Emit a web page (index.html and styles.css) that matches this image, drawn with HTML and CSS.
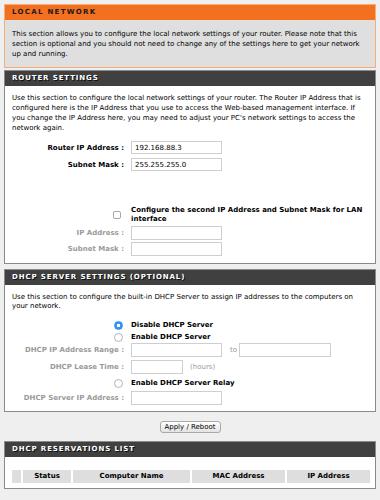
FILE: index.html
```html
<!DOCTYPE html>
<html lang="en">
  <head>
    <meta charset="utf-8" />
    <title>Local Network</title>
    <link rel="stylesheet" href="styles.css">
  </head>
  <body>
    <div class="page">
      <div class="notice">
        <h2 class="notice-title">LOCAL NETWORK</h2>
        <p class="notice-text">This section allows you to configure the local network settings of your router. Please note that this section is optional and you should not need to change any of the settings here to get your network up and running.</p>
      </div>

      <div class="section router">
        <h2 class="section-title">ROUTER SETTINGS</h2>
        <div class="section-body">
          <p class="intro">Use this section to configure the local network settings of your router. The Router IP Address that is configured here is the IP Address that you use to access the Web-based management interface. If you change the IP Address here, you may need to adjust your PC's network settings to access the network again.</p>
          <div class="field first">
            <label class="field-label">Router IP Address :</label>
            <input class="text wide" value="192.168.88.3" />
          </div>
          <div class="field second">
            <label class="field-label">Subnet Mask :</label>
            <input class="text wide" value="255.255.255.0" />
          </div>
          <div class="check-row">
            <span class="field-label"><input type="checkbox" class="checkbox" /></span>
            <span class="check-text">Configure the second IP Address and Subnet Mask for LAN interface</span>
          </div>
          <div class="field disabled lan-ip">
            <label class="field-label">IP Address :</label>
            <input class="text wide tall" />
          </div>
          <div class="field disabled lan-mask">
            <label class="field-label">Subnet Mask :</label>
            <input class="text wide tall" />
          </div>
        </div>
      </div>

      <div class="section dhcp">
        <h2 class="section-title">DHCP SERVER SETTINGS (OPTIONAL)</h2>
        <div class="section-body">
          <p class="intro tight">Use this section to configure the built-in DHCP Server to assign IP addresses to the computers on your network.</p>
          <div class="radio-row disable">
            <span class="field-label"><input type="radio" name="dhcp" class="radio" checked /></span>
            <span class="radio-text">Disable DHCP Server</span>
          </div>
          <div class="radio-row enable">
            <span class="field-label"><input type="radio" name="dhcp" class="radio" /></span>
            <span class="radio-text">Enable DHCP Server</span>
          </div>
          <div class="field disabled range">
            <label class="field-label">DHCP IP Address Range :</label>
            <input class="text wide tall" />
            <span class="note to">to</span>
            <input class="text wide tall" />
          </div>
          <div class="field disabled lease">
            <label class="field-label">DHCP Lease Time :</label>
            <input class="text short tall" />
            <span class="note hours">(hours)</span>
          </div>
          <div class="radio-row relay">
            <span class="field-label"><input type="radio" name="dhcp" class="radio" /></span>
            <span class="radio-text">Enable DHCP Server Relay</span>
          </div>
          <div class="field disabled relay-ip">
            <label class="field-label">DHCP Server IP Address :</label>
            <input class="text wide tall" />
          </div>
        </div>
      </div>

      <div class="actions">
        <button class="apply">Apply / Reboot</button>
      </div>

      <div class="section reservations">
        <h2 class="section-title">DHCP RESERVATIONS LIST</h2>
        <div class="section-body list-body">
          <div class="list-head">
            <div class="cell"></div>
            <div class="cell">Status</div>
            <div class="cell">Computer Name</div>
            <div class="cell">MAC Address</div>
            <div class="cell">IP Address</div>
          </div>
        </div>
      </div>
    </div>
  </body>
</html>
```

FILE: styles.css
```css
* {
  font-family: "DejaVu Sans", Verdana, sans-serif;
  box-sizing: border-box;
}

html, body {
  height: 100%;
  width: 100%;
}

body {
  margin: 0;
  background-color: #efefef;
  font-size: 7px;
  line-height: 10px;
  color: #000000;
}

.page {
  padding: 4px 4px 0 4px;
}

h2, p {
  margin: 0;
}

/* orange intro box */
.notice {
  border: 1px solid #f5ad78;
  background-color: #dfdfdf;
}

.notice-title {
  height: 15px;
  line-height: 15px;
  padding-left: 7px;
  background-color: #f2701f;
  font-size: 7px;
  font-weight: 700;
  letter-spacing: 1.3px;
  color: #1a1a1a;
}

.notice-text {
  padding: 9px 7px 8px 7px;
}

/* dark boxes */
.section {
  border: 1px solid #8a8a8a;
  background-color: #ffffff;
}

.router {
  margin-top: 2px;
}

.dhcp {
  margin-top: 5px;
}

.section-title {
  height: 15px;
  line-height: 15px;
  padding-left: 7px;
  background-color: #404040;
  font-size: 7px;
  font-weight: 700;
  letter-spacing: 0.9px;
  color: #ffffff;
  text-shadow: 1px 1px 0 #111111;
}

.section-body {
  padding: 7px 7px 7px 7px;
}

.dhcp .section-body {
  padding: 8px 7px 6px 7px;
}

.intro.tight {
  line-height: 9px;
}

.field, .check-row, .radio-row {
  display: flex;
  align-items: center;
}

.field-label {
  flex: none;
  width: 112px;
  margin-right: 7px;
  text-align: right;
  font-weight: 700;
  display: flex;
  justify-content: flex-end;
  align-items: center;
}

.disabled .field-label, .note {
  color: #9a9a9a;
}

.text {
  height: 13px;
  padding: 0 3px;
  border: 1px solid #cfcfcf;
  background-color: #ffffff;
  font-size: 7px;
  color: #000000;
  outline: none;
}

.text.tall {
  height: 14px;
}

.wide {
  width: 91px;
}

.short {
  width: 52px;
}

.note.to {
  margin: 0 2px 0 8px;
}

.range .text + .note + .text {
  width: 92px;
}

.note.hours {
  margin-left: 7px;
}

/* vertical rhythm taken from the screenshot */
.field.first { margin-top: 8px; }
.field.second { margin-top: 4px; }
.check-row { margin-top: 35px; }
.lan-ip { margin-top: 2px; }
.lan-mask { margin-top: 2px; }

.radio-row.disable { margin-top: 9px; height: 10px; }
.radio-row.enable { margin-top: 2px; height: 10px; }
.range { margin-top: 1px; }
.lease { margin-top: 3px; }
.radio-row.relay { margin-top: 4px; height: 10px; }
.relay-ip { margin-top: 3px; }

.check-text {
  width: 240px;
  font-weight: 700;
  line-height: 9px;
}

.radio-text {
  font-weight: 700;
}

.checkbox {
  appearance: none;
  -webkit-appearance: none;
  width: 8px;
  height: 8px;
  margin: 0 3px 0 0;
  border: 1px solid #a8a8a8;
  border-radius: 2px;
  background-color: #ffffff;
}

.radio {
  appearance: none;
  -webkit-appearance: none;
  width: 9px;
  height: 9px;
  margin: 0 1px 0 0;
  border: 1px solid #b4b4b4;
  border-radius: 50%;
  background-color: #ffffff;
}

.radio:checked {
  border-color: #2f8cf6;
  background: radial-gradient(circle, #ffffff 0 1.5px, #3595fb 2px);
}

.actions {
  display: flex;
  justify-content: center;
  margin-top: 9px;
}

.apply {
  height: 12px;
  width: 61px;
  padding: 0;
  border: 1px solid #a9a9a9;
  border-radius: 3px;
  background: linear-gradient(#ffffff, #e4e4e4);
  font-size: 7px;
  line-height: 10px;
  color: #000000;
}

.reservations {
  margin-top: 8px;
}

.list-body {
  padding: 13px 3px 5px 7px;
}

.list-head {
  display: grid;
  grid-template-columns: 9px 48px 117px 93px 83px;
  column-gap: 2px;
}

.cell {
  height: 13px;
  line-height: 13px;
  background-color: #dedede;
  text-align: center;
  font-weight: 700;
}
```
